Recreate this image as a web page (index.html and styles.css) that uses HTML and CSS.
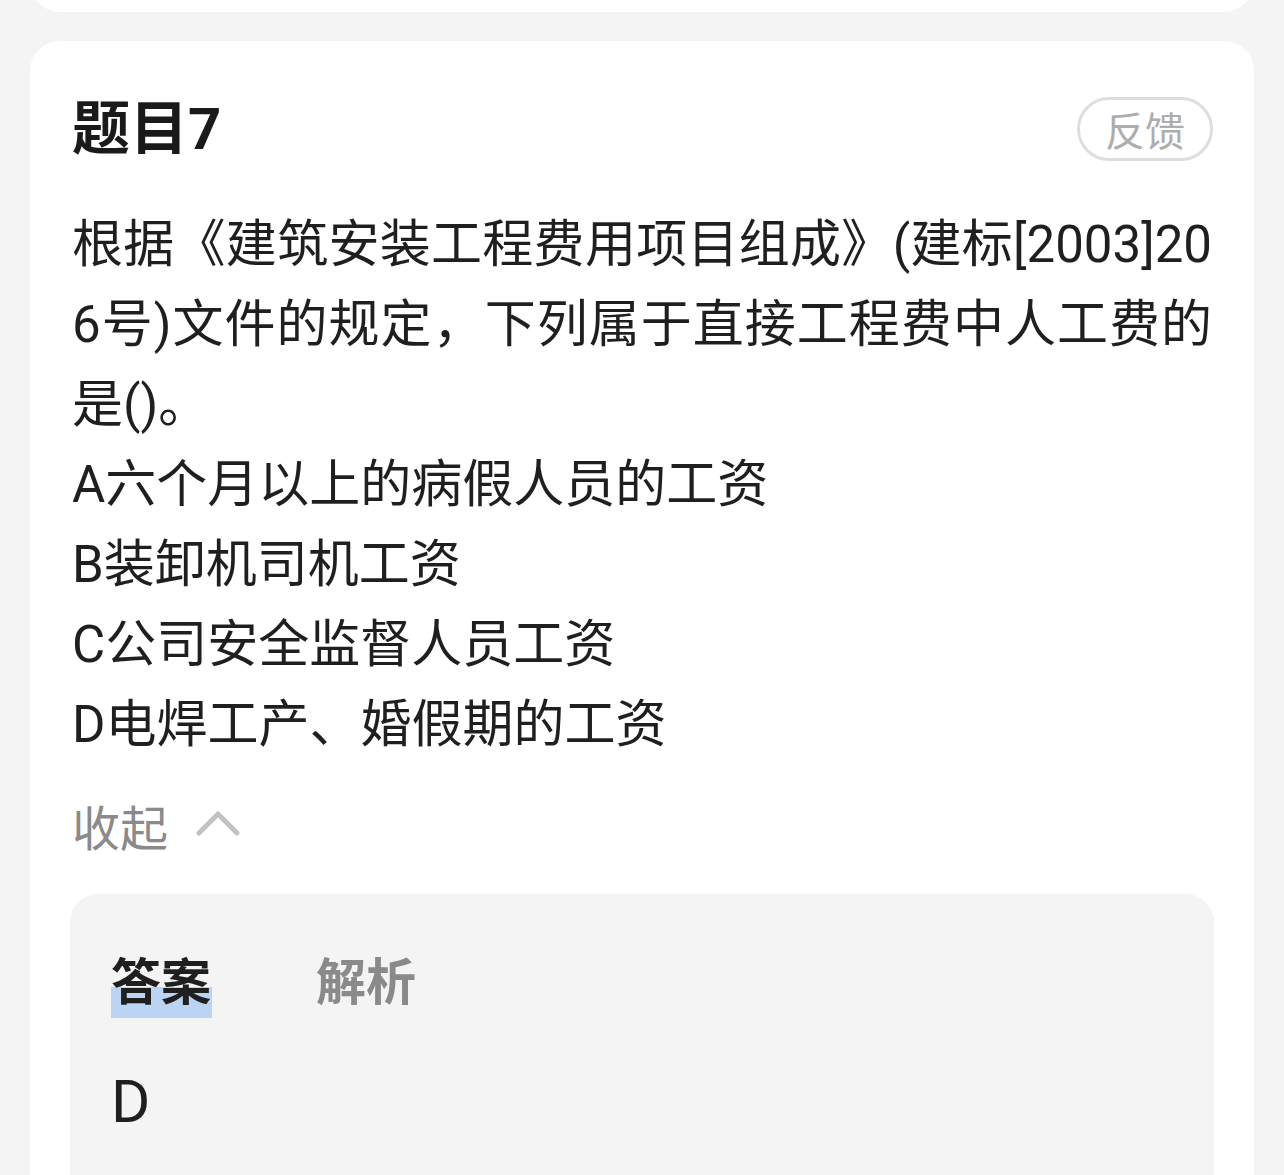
FILE: index.html
```html
<!DOCTYPE html>
<html lang="zh-CN">
<head>
<meta charset="UTF-8">
<meta name="viewport" content="width=device-width, initial-scale=1.0">
<title>题目7</title>
<link rel="stylesheet" href="styles.css">
</head>
<body>
    <!-- previous question card, scrolled mostly out of view -->
    <div class="card card-prev"></div>

    <div class="card">
        <div class="card-head">
            <h2 class="title">题目7</h2>
            <button class="feedback">反馈</button>
        </div>

        <p class="question">根据《建筑安装工程费用项目组成》(建标[2003]206号)文件的规定，下列属于直接工程费中人工费的是()。</p>
        <div class="option">A六个月以上的病假人员的工资</div>
        <div class="option">B装卸机司机工资</div>
        <div class="option">C公司安全监督人员工资</div>
        <div class="option">D电焊工产、婚假期的工资</div>

        <div class="toggle">
            收起
            <svg class="chevron" width="44" height="26" viewBox="0 0 44 26">
                <polyline points="3,23 22,4 41,23" fill="none" stroke="#c2c2c2" stroke-width="5" stroke-linecap="round" stroke-linejoin="round"/>
            </svg>
        </div>

        <div class="answer-box">
            <div class="tabs">
                <span class="tab active">答案</span>
                <span class="tab">解析</span>
            </div>
            <div class="answer">D</div>
        </div>
    </div>
</body>
</html>
```

FILE: styles.css
```css
body {
    margin: 0;
    background-color: #f4f4f4;
    font-family: "Roboto", "Noto Sans CJK SC", sans-serif;
    color: #1f1f1f;
}

.card {
    background-color: #fff;
    border-radius: 30px;
    margin: 0 30px;
    padding: 52px 42px 80px 42px;
}

.card-prev {
    margin-top: -60px;
    margin-bottom: 29px;
    height: 72px;
    padding: 0;
}

.card-head {
    display: flex;
    justify-content: space-between;
    align-items: center;
    height: 72px;
}

.title {
    margin: 0;
    font-size: 58px;
    font-weight: bold;
    color: #1a1a1a;
    line-height: 72px;
}

.feedback {
    font-family: "Noto Sans CJK SC", sans-serif;
    font-size: 40px;
    color: #adadad;
    background: #fff;
    border: 3px solid #dedede;
    border-radius: 32px;
    height: 64px;
    width: 136px;
    padding: 0;
    line-height: 56px;
    margin-right: -1px;
}

.question {
    margin: 40px 0 0 0;
    font-size: 51px;
    line-height: 80px;
    word-break: break-all;
    text-align: justify;
}

.option {
    font-size: 51px;
    line-height: 80px;
}

.toggle {
    display: flex;
    align-items: center;
    height: 80px;
    margin-top: 20px;
    font-size: 48px;
    color: #8a8a8a;
}

.chevron {
    margin-left: 28px;
    margin-top: -4px;
}

.answer-box {
    margin: 29px -2px 0 -2px;
    background-color: #f4f4f4;
    border-radius: 28px;
    padding: 51px 41px 60px 41px;
}

.tabs {
    display: flex;
    gap: 105px;
}

.tab {
    position: relative;
    z-index: 0;
    font-size: 50px;
    font-weight: bold;
    line-height: 76px;
    color: #8a8a8a;
}

.tab.active {
    color: #1f1f1f;
}

.tab.active::after {
    content: "";
    position: absolute;
    left: 0;
    right: -1px;
    bottom: 3px;
    height: 31px;
    background-color: #bcd4f3;
    z-index: -1;
}

.answer {
    margin-top: 41px;
    font-size: 60px;
    line-height: 80px;
}
```
